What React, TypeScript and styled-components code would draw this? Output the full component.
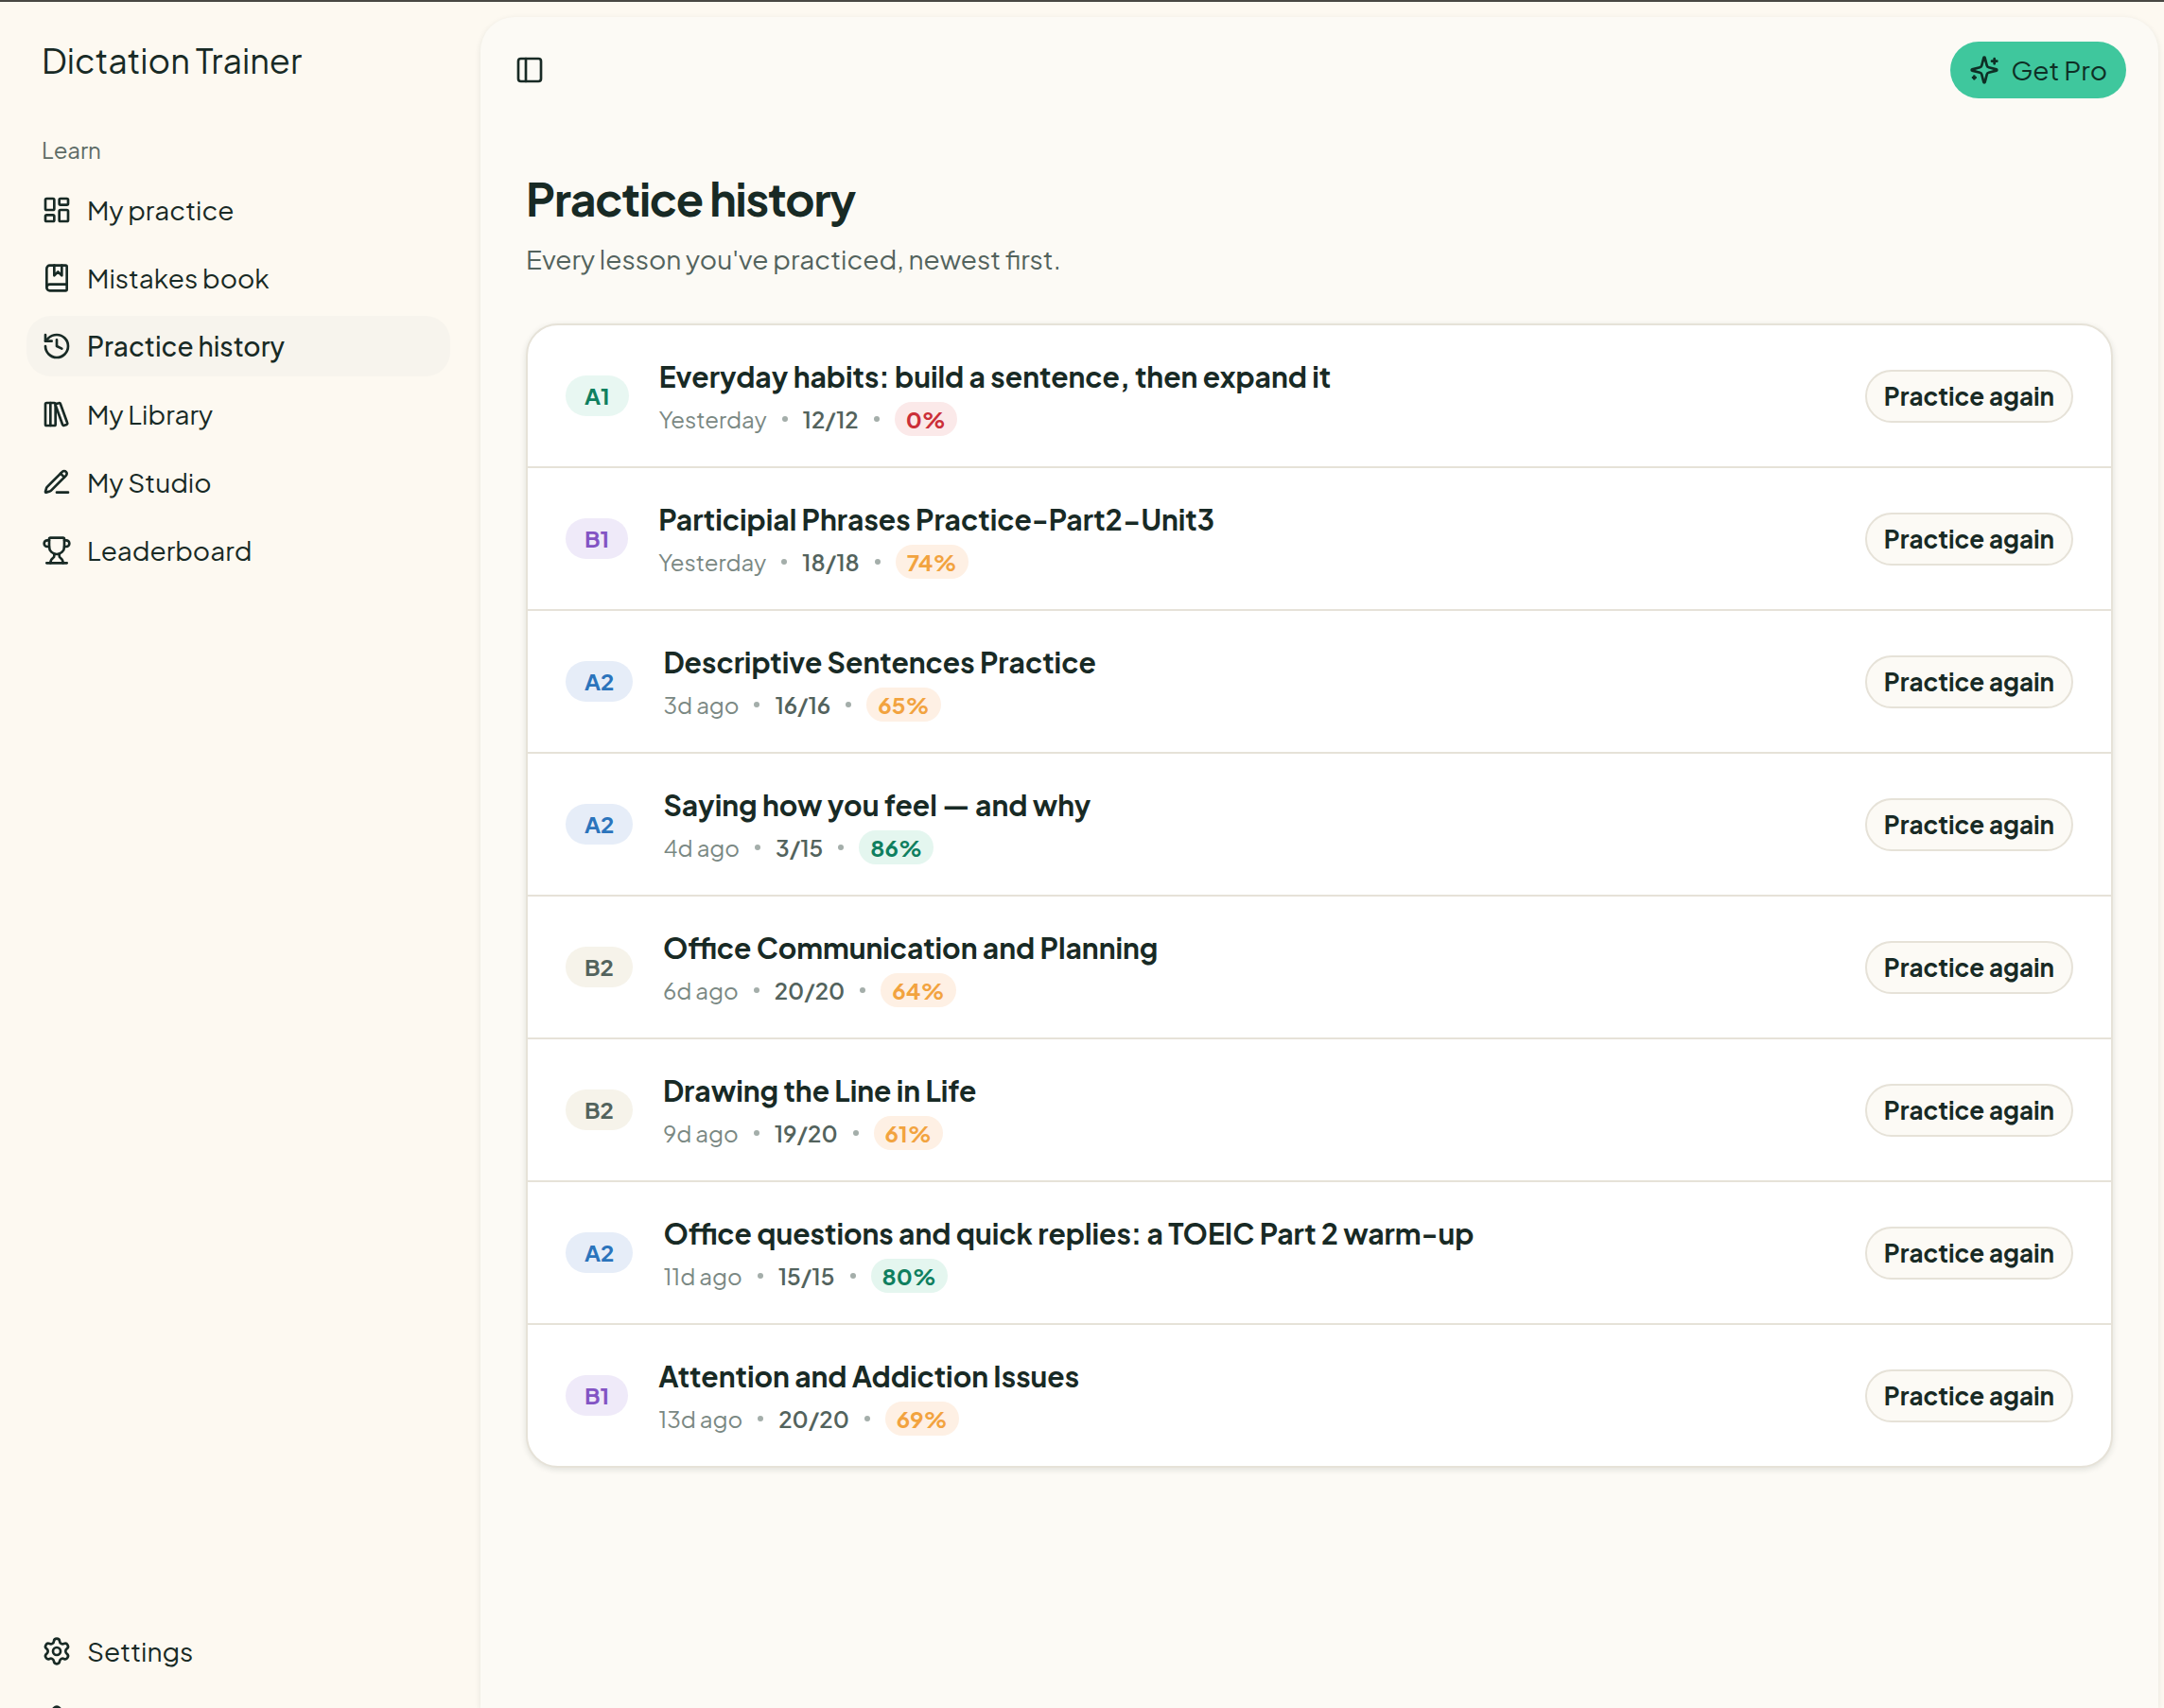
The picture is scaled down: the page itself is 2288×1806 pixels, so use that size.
import React from 'react';
import type { ReactNode } from 'react';
import styled, { createGlobalStyle } from 'styled-components';
import {
  BookMarked,
  History,
  LayoutDashboard,
  LibraryBig,
  Mic,
  PanelLeft,
  Settings,
  Trophy,
} from 'lucide-react';

const GlobalStyle = createGlobalStyle`
  *, *::before, *::after { box-sizing: border-box; }
  body {
    margin: 0;
    background: #fdf9f1;
    color: #182a25;
    font-family: "Plus Jakarta Sans", Inter, "Liberation Sans", sans-serif;
    font-size: 28px;
    line-height: 40px;
  }
  button { font-family: inherit; cursor: pointer; }
`;

const Shell = styled.div`
  display: flex;
  height: 100vh;
  overflow: hidden;
  border-top: 2px solid #484843;
`;

const Sidebar = styled.aside`
  display: flex;
  flex-direction: column;
  flex: 0 0 508px;
  padding: 36px 32px 0 28px;
`;

const Brand = styled.a`
  padding: 0 16px;
  color: inherit;
  font-size: 36px;
  line-height: 52px;
  text-decoration: none;
`;

const GroupLabel = styled.h2`
  margin: 48px 0 0;
  padding: 0 16px;
  color: #5d6c66;
  font-size: 24px;
  font-weight: 400;
  line-height: 40px;
`;

const NavList = styled.ul`
  display: flex;
  flex-direction: column;
  gap: 8px;
  margin: 0;
  padding: 12px 0 0;
  list-style: none;
`;

const FooterNav = styled.nav`
  height: 92px;
  margin-top: auto;
  overflow: hidden;

  ${NavList} { padding-top: 0; }
`;

const NavLink = styled.a<{ $active?: boolean }>`
  display: flex;
  align-items: center;
  gap: 16px;
  height: 64px;
  padding: 0 16px;
  border-radius: 26px;
  background: ${(p) => (p.$active ? '#f7f4ed' : 'transparent')};
  color: inherit;
  font-weight: ${(p) => (p.$active ? 500 : 400)};
  text-decoration: none;
`;

const Panel = styled.div`
  flex: 1;
  min-width: 0;
  margin: 16px 6px 0 0;
  border-radius: 36px 36px 0 0;
  background: #fcfaf5;
  box-shadow: 0 2px 6px rgba(24, 42, 37, 0.1);
`;

const TopBar = styled.header`
  display: flex;
  align-items: center;
  justify-content: space-between;
  height: 112px;
  padding: 0 34px 0 36px;
`;

const ToggleButton = styled.button`
  display: flex;
  padding: 0;
  border: 0;
  background: none;
  color: inherit;
`;

const ProButton = styled.button`
  display: flex;
  align-items: center;
  gap: 12px;
  height: 60px;
  padding: 0 20px;
  border: 0;
  border-radius: 30px;
  background: #3fc79d;
  color: #0e2f25;
  font-size: 28px;
  line-height: 40px;
`;

const Content = styled.main`
  padding: 48px 48px 0;
`;

const Title = styled.h1`
  margin: 0;
  font-size: 48px;
  font-weight: 700;
  letter-spacing: -0.025em;
  line-height: 64px;
`;

const Subtitle = styled.p`
  margin: 12px 0 48px;
  color: #53635d;
`;

const Card = styled.ul`
  margin: 0;
  padding: 0;
  border: 2px solid #e6e2d8;
  border-radius: 34px;
  background: #ffffff;
  box-shadow: 0 2px 6px rgba(24, 42, 37, 0.12);
  list-style: none;
`;

const Row = styled.li`
  display: flex;
  align-items: center;
  gap: 32px;
  padding: 32px 40px;

  & + & { border-top: 2px solid #e6e2d8; }
`;

const tones = {
  A1: { background: '#e8f7f2', color: '#0f7f5f' },
  A2: { background: '#e6edf8', color: '#2b74bc' },
  B1: { background: '#efeaf9', color: '#8354c4' },
  B2: { background: '#f6f3ea', color: '#53635d' },
  low: { background: '#fbe9e9', color: '#cb2f38' },
  mid: { background: '#fef0e4', color: '#f2a33f' },
  high: { background: '#e4f6ef', color: '#0f7f5f' },
};

type Tone = keyof typeof tones;

const Pill = styled.span<{ $tone: Tone }>`
  background: ${(p) => tones[p.$tone].background};
  color: ${(p) => tones[p.$tone].color};
  font-weight: 700;
`;

const LevelPill = styled(Pill)`
  padding: 3px 20px 4px;
  border-radius: 22px;
  font-size: 24px;
  line-height: 36px;
`;

const ScorePill = styled(Pill)`
  padding: 0 12px;
  border-radius: 18px;
  line-height: 36px;
`;

const Lesson = styled.div`
  display: flex;
  flex: 1;
  flex-direction: column;
  gap: 4px;
  min-width: 0;
`;

const LessonTitle = styled.h3`
  margin: 0;
  font-size: 30px;
  font-weight: 700;
  line-height: 45px;
`;

const Meta = styled.div`
  display: flex;
  align-items: center;
  gap: 16px;
  color: #7a8883;
  font-size: 24px;
  line-height: 36px;
`;

const Dot = styled.span`
  width: 6px;
  height: 6px;
  border-radius: 50%;
  background: #a4aeaa;
`;

const Count = styled.span`
  color: #53635d;
  font-weight: 600;
`;

const AgainButton = styled.button`
  padding: 8px 18px;
  border: 2px solid #e6e2d8;
  border-radius: 28px;
  background: #fcfaf5;
  color: inherit;
  font-size: 26px;
  font-weight: 700;
  line-height: 36px;
  white-space: nowrap;
`;

type IconProps = { size: number };

const StrokeIcon = ({ size, children }: IconProps & { children: ReactNode }) => (
  <svg
    width={size}
    height={size}
    viewBox="0 0 24 24"
    fill="none"
    stroke="currentColor"
    strokeWidth="2"
    strokeLinecap="round"
    strokeLinejoin="round"
    aria-hidden="true"
  >
    {children}
  </svg>
);

const PencilLine = ({ size }: IconProps) => (
  <StrokeIcon size={size}>
    <path d="M12 20h9" />
    <path d="M16.376 3.622a1 1 0 0 1 3.002 3.002L7.368 18.635a2 2 0 0 1-.855.506l-2.872.838a.5.5 0 0 1-.62-.62l.838-2.872a2 2 0 0 1 .506-.854z" />
    <path d="m15 5 3 3" />
  </StrokeIcon>
);

const Sparkle = ({ size }: IconProps) => (
  <StrokeIcon size={size}>
    <path d="M9.937 15.5A2 2 0 0 0 8.5 14.063l-6.135-1.582a.5.5 0 0 1 0-.962L8.5 9.936A2 2 0 0 0 9.937 8.5l1.582-6.135a.5.5 0 0 1 .963 0L14.063 8.5A2 2 0 0 0 15.5 9.937l6.135 1.581a.5.5 0 0 1 0 .964L15.5 14.063a2 2 0 0 0-1.437 1.437l-1.582 6.135a.5.5 0 0 1-.963 0z" />
    <path d="M20 3v4" />
    <path d="M22 5h-4" />
    <path d="M4 17v2" />
    <path d="M5 18H3" />
  </StrokeIcon>
);

const navItems = [
  { label: 'My practice', Icon: LayoutDashboard },
  { label: 'Mistakes book', Icon: BookMarked },
  { label: 'Practice history', Icon: History, active: true },
  { label: 'My Library', Icon: LibraryBig },
  { label: 'My Studio', Icon: PencilLine },
  { label: 'Leaderboard', Icon: Trophy },
];

const lessons: { level: Tone; title: string; when: string; count: string; score: number }[] = [
  { level: 'A1', title: 'Everyday habits: build a sentence, then expand it', when: 'Yesterday', count: '12/12', score: 0 },
  { level: 'B1', title: 'Participial Phrases Practice-Part2-Unit3', when: 'Yesterday', count: '18/18', score: 74 },
  { level: 'A2', title: 'Descriptive Sentences Practice', when: '3d ago', count: '16/16', score: 65 },
  { level: 'A2', title: 'Saying how you feel — and why', when: '4d ago', count: '3/15', score: 86 },
  { level: 'B2', title: 'Office Communication and Planning', when: '6d ago', count: '20/20', score: 64 },
  { level: 'B2', title: 'Drawing the Line in Life', when: '9d ago', count: '19/20', score: 61 },
  { level: 'A2', title: 'Office questions and quick replies: a TOEIC Part 2 warm-up', when: '11d ago', count: '15/15', score: 80 },
  { level: 'B1', title: 'Attention and Addiction Issues', when: '13d ago', count: '20/20', score: 69 },
];

const scoreTone = (score: number): Tone => (score >= 80 ? 'high' : score >= 50 ? 'mid' : 'low');

export default function App() {
  return (
    <>
      <GlobalStyle />
      <Shell>
        <Sidebar>
          <Brand href="#">Dictation Trainer</Brand>
          <GroupLabel>Learn</GroupLabel>
          <nav aria-label="Learn">
            <NavList>
              {navItems.map(({ label, Icon, active }) => (
                <li key={label}>
                  <NavLink href="#" $active={active} aria-current={active ? 'page' : undefined}>
                    <Icon size={32} />
                    {label}
                  </NavLink>
                </li>
              ))}
            </NavList>
          </nav>
          <FooterNav aria-label="Account">
            <NavList>
              <li>
                <NavLink href="#">
                  <Settings size={32} />
                  Settings
                </NavLink>
              </li>
              <li>
                <NavLink href="#" aria-label="Voice">
                  <Mic size={32} />
                </NavLink>
              </li>
            </NavList>
          </FooterNav>
        </Sidebar>
        <Panel>
          <TopBar>
            <ToggleButton type="button" aria-label="Toggle sidebar">
              <PanelLeft size={32} />
            </ToggleButton>
            <ProButton type="button">
              <Sparkle size={32} />
              Get Pro
            </ProButton>
          </TopBar>
          <Content>
            <Title>Practice history</Title>
            <Subtitle>Every lesson you've practiced, newest first.</Subtitle>
            <Card>
              {lessons.map((lesson) => (
                <Row key={lesson.title}>
                  <LevelPill $tone={lesson.level}>{lesson.level}</LevelPill>
                  <Lesson>
                    <LessonTitle>{lesson.title}</LessonTitle>
                    <Meta>
                      <span>{lesson.when}</span>
                      <Dot />
                      <Count>{lesson.count}</Count>
                      <Dot />
                      <ScorePill $tone={scoreTone(lesson.score)}>{lesson.score}%</ScorePill>
                    </Meta>
                  </Lesson>
                  <AgainButton type="button">Practice again</AgainButton>
                </Row>
              ))}
            </Card>
          </Content>
        </Panel>
      </Shell>
    </>
  );
}
